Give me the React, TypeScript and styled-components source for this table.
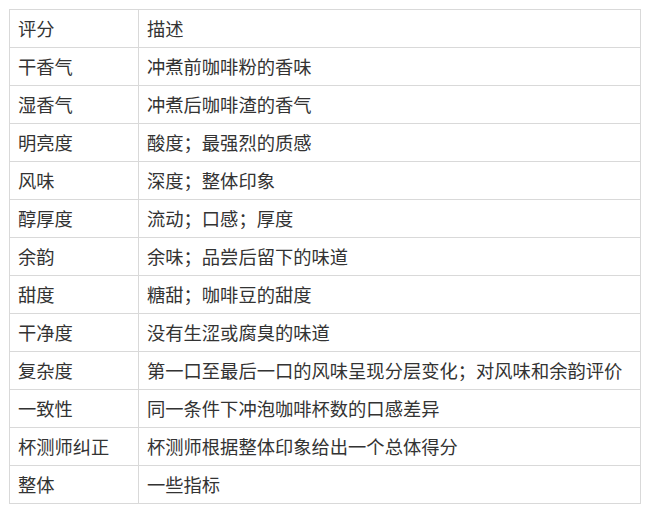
import styled, { createGlobalStyle } from "styled-components";

const GlobalStyle = createGlobalStyle`
  body {
    margin: 0;
    background: #ffffff;
    font-family: "Noto Sans CJK SC", "Noto Sans", sans-serif;
  }
`;

const Page = styled.div`
  padding: 9px 6px 9px 9px;
`;

const Table = styled.table`
  width: 632px;
  border-collapse: collapse;
  color: #333333;
  font-size: 18.3px;
`;

const Cell = styled.td<{ $first?: boolean }>`
  border: 1px solid #d9d9d9;
  padding: 8px;
  line-height: 21px;
  height: 21px;
  width: ${(p) => (p.$first ? "112px" : "auto")};
  white-space: nowrap;
  vertical-align: middle;
`;

const rows: [string, string][] = [
  ["评分", "描述"],
  ["干香气", "冲煮前咖啡粉的香味"],
  ["湿香气", "冲煮后咖啡渣的香气"],
  ["明亮度", "酸度；最强烈的质感"],
  ["风味", "深度；整体印象"],
  ["醇厚度", "流动；口感；厚度"],
  ["余韵", "余味；品尝后留下的味道"],
  ["甜度", "糖甜；咖啡豆的甜度"],
  ["干净度", "没有生涩或腐臭的味道"],
  ["复杂度", "第一口至最后一口的风味呈现分层变化；对风味和余韵评价"],
  ["一致性", "同一条件下冲泡咖啡杯数的口感差异"],
  ["杯测师纠正", "杯测师根据整体印象给出一个总体得分"],
  ["整体", "一些指标"],
];

export default function App() {
  return (
    <>
      <GlobalStyle />
      <Page>
        <Table>
          <tbody>
            {rows.map(([a, b]) => (
              <tr key={a}>
                <Cell $first>{a}</Cell>
                <Cell>{b}</Cell>
              </tr>
            ))}
          </tbody>
        </Table>
      </Page>
    </>
  );
}
